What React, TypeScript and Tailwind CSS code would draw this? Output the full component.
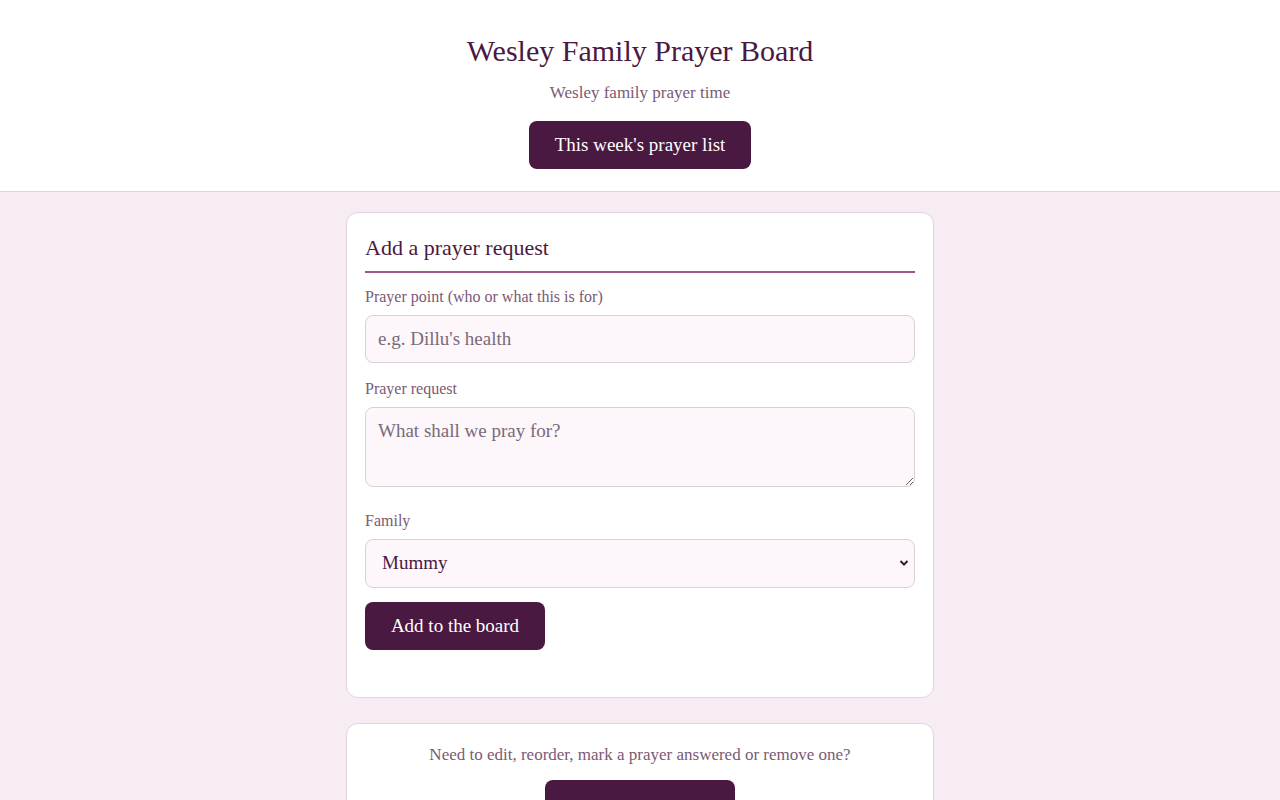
import React from "react";

const serif = { fontFamily: '"Liberation Serif", "Times New Roman", serif' };

export default function App() {
  return (
    <div className="min-h-[800px] bg-[#f7ecf4]" style={serif}>
      <header className="bg-white border-b border-[#e2d4df] pt-[33px] pb-[22px] flex flex-col items-center">
        <h1 className="text-[30px] leading-[36px] text-[#4a1942]">Wesley Family Prayer Board</h1>
        <p className="mt-[13px] text-[17px] leading-[22px] text-[#7b5a73]">Wesley family prayer time</p>
        <button className="mt-[17px] h-[48px] px-[26px] rounded-[8px] bg-[#4a1942] text-white text-[19px]">
          This week's prayer list
        </button>
      </header>
      <main className="flex flex-col items-center pt-[20px] gap-[25px]">
        <section className="w-[588px] bg-white border border-[#e2d4df] rounded-[12px] px-[18px] pt-[21px] pb-[47px]">
          <h2 className="text-[22px] leading-[28px] text-[#4a1942] pb-[9px] border-b-2 border-[#a3558e]">
            Add a prayer request
          </h2>
          <label className="block mt-[14px] text-[16px] leading-[20px] text-[#7b5a73]">
            Prayer point (who or what this is for)
          </label>
          <input
            className="block mt-[8px] w-full h-[48px] px-[12px] rounded-[8px] border border-[#dccfd9] bg-[#fdf7fb] text-[19px] text-[#4a1942] placeholder:text-[#7a6a76] outline-none"
            style={serif}
            placeholder="e.g. Dillu's health"
          />
          <label className="block mt-[16px] text-[16px] leading-[20px] text-[#7b5a73]">Prayer request</label>
          <textarea
            className="block mt-[8px] w-full h-[80px] px-[12px] py-[11px] rounded-[8px] border border-[#dccfd9] bg-[#fdf7fb] text-[19px] leading-[24px] text-[#4a1942] placeholder:text-[#7a6a76] outline-none"
            style={serif}
            placeholder="What shall we pray for?"
          />
          <label className="block mt-[24px] text-[16px] leading-[20px] text-[#7b5a73]">Family</label>
          <div className="relative mt-[8px]">
            <select
              className="block w-full h-[49px] pl-[16px] pr-[32px] rounded-[8px] border border-[#dccfd9] bg-[#fdf7fb] text-[19px] text-[#4a1942] appearance-none outline-none"
              style={serif}
              defaultValue="Mummy"
            >
              <option>Mummy</option>
              <option>Daddy</option>
              <option>Dillu</option>
            </select>
            <svg className="absolute right-[6px] top-[20px] pointer-events-none" width="10" height="8" viewBox="0 0 10 8">
              <path d="M1.5 2 L5 5.5 L8.5 2" fill="none" stroke="#3a1a35" strokeWidth="2" />
            </svg>
          </div>
          <button className="mt-[14px] h-[48px] w-[180px] rounded-[8px] bg-[#4a1942] text-white text-[19px]">
            Add to the board
          </button>
        </section>
        <section className="w-[588px] bg-white border border-[#e2d4df] rounded-[12px] px-[18px] pt-[20px] pb-[24px] flex flex-col items-center">
          <p className="text-[17px] leading-[22px] text-[#7b5a73]">
            Need to edit, reorder, mark a prayer answered or remove one?
          </p>
          <button className="mt-[14px] h-[56px] w-[190px] rounded-[8px] bg-[#4a1942] text-white text-[19px]">
            Manage prayers
          </button>
        </section>
      </main>
    </div>
  );
}
